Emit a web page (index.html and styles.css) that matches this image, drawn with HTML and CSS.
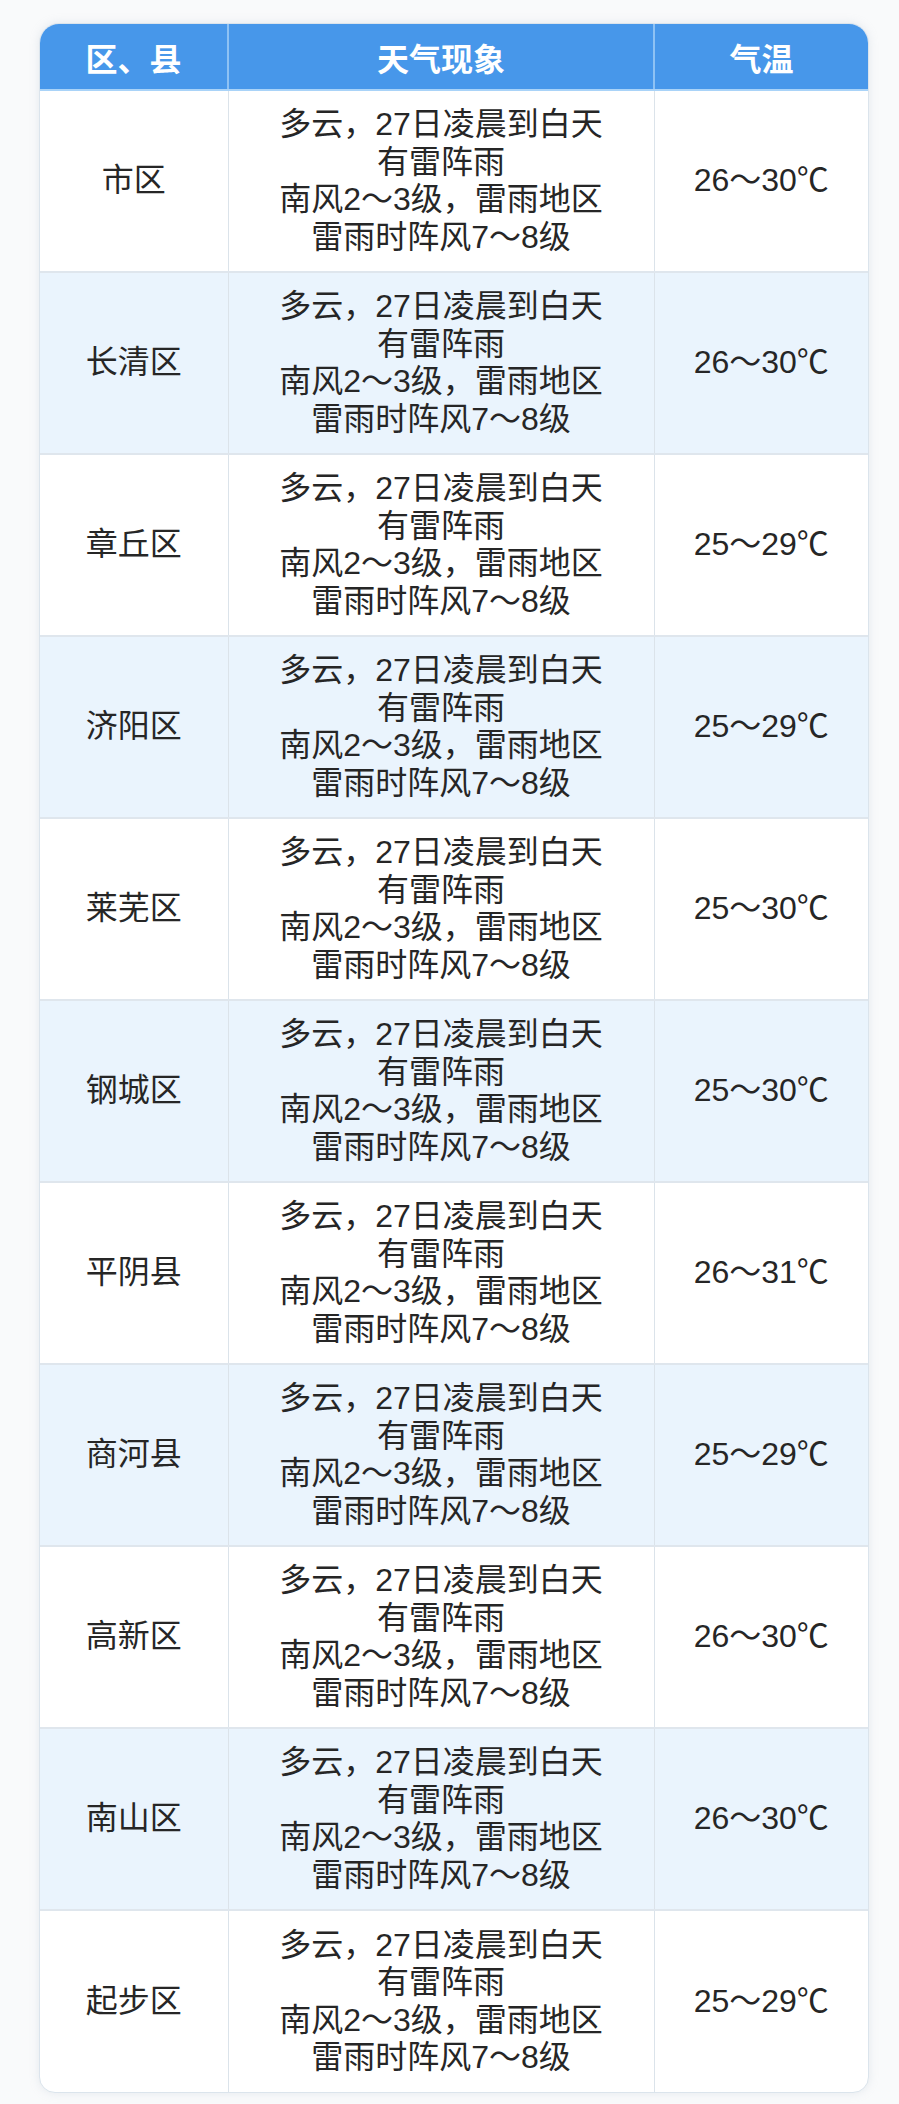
FILE: index.html
```html
<!DOCTYPE html>
<html lang="zh">
<head>
<meta charset="utf-8">
<title>天气预报</title>
<link rel="stylesheet" href="styles.css">
</head>
<body>
<div class="page">
  <div class="card">
    <table class="weather">
      <thead>
        <tr><th class="c1">区、县</th><th class="c2">天气现象</th><th class="c3">气温</th></tr>
      </thead>
      <tbody>
        <tr><td>市区</td><td>多云，27日凌晨到白天<br>有雷阵雨<br>南风2～3级，雷雨地区<br>雷雨时阵风7～8级</td><td>26～30℃</td></tr>
        <tr class="alt"><td>长清区</td><td>多云，27日凌晨到白天<br>有雷阵雨<br>南风2～3级，雷雨地区<br>雷雨时阵风7～8级</td><td>26～30℃</td></tr>
        <tr><td>章丘区</td><td>多云，27日凌晨到白天<br>有雷阵雨<br>南风2～3级，雷雨地区<br>雷雨时阵风7～8级</td><td>25～29℃</td></tr>
        <tr class="alt"><td>济阳区</td><td>多云，27日凌晨到白天<br>有雷阵雨<br>南风2～3级，雷雨地区<br>雷雨时阵风7～8级</td><td>25～29℃</td></tr>
        <tr><td>莱芜区</td><td>多云，27日凌晨到白天<br>有雷阵雨<br>南风2～3级，雷雨地区<br>雷雨时阵风7～8级</td><td>25～30℃</td></tr>
        <tr class="alt"><td>钢城区</td><td>多云，27日凌晨到白天<br>有雷阵雨<br>南风2～3级，雷雨地区<br>雷雨时阵风7～8级</td><td>25～30℃</td></tr>
        <tr><td>平阴县</td><td>多云，27日凌晨到白天<br>有雷阵雨<br>南风2～3级，雷雨地区<br>雷雨时阵风7～8级</td><td>26～31℃</td></tr>
        <tr class="alt"><td>商河县</td><td>多云，27日凌晨到白天<br>有雷阵雨<br>南风2～3级，雷雨地区<br>雷雨时阵风7～8级</td><td>25～29℃</td></tr>
        <tr><td>高新区</td><td>多云，27日凌晨到白天<br>有雷阵雨<br>南风2～3级，雷雨地区<br>雷雨时阵风7～8级</td><td>26～30℃</td></tr>
        <tr class="alt"><td>南山区</td><td>多云，27日凌晨到白天<br>有雷阵雨<br>南风2～3级，雷雨地区<br>雷雨时阵风7～8级</td><td>26～30℃</td></tr>
        <tr><td>起步区</td><td>多云，27日凌晨到白天<br>有雷阵雨<br>南风2～3级，雷雨地区<br>雷雨时阵风7～8级</td><td>25～29℃</td></tr>
      </tbody>
    </table>
  </div>
</div>
</body>
</html>
```

FILE: styles.css
```css
html, body {
  margin: 0;
  padding: 0;
  background: #f9fafb;
}
.page {
  padding: 23px 30px 10px 39px;
}
.card {
  width: 830px;
  border-radius: 20px 20px 16px 16px;
  overflow: hidden;
  background: #ffffff;
  border: 1px solid #dbe4ec;
  box-sizing: border-box;
  box-shadow: 0 0 10px rgba(170, 185, 200, 0.25);
}
.weather {
  width: 100%;
  border-collapse: collapse;
  table-layout: fixed;
  font-family: "Liberation Sans", "Noto Sans CJK SC", sans-serif;
  color: #262626;
}
.weather th {
  background: #4797ea;
  color: #ffffff;
  font-size: 32px;
  font-weight: 700;
  height: 66px;
  padding: 0;
  border-left: 2px solid #8ec2f4;
  border-bottom: 2px solid #a9d3f8;
  box-sizing: border-box;
}
.weather th:first-child { border-left: none; }
.weather .c1 { width: 188px; }
.weather .c2 { width: 426px; }
.weather td {
  height: 182px;
  padding: 0;
  text-align: center;
  vertical-align: middle;
  font-size: 32px;
  line-height: 37.5px;
  border-left: 1px solid #dbe3ea;
  border-top: 2px solid #dfe6ed;
  box-sizing: border-box;
}
.weather td:first-child { border-left: none; }
.weather tbody tr:first-child td { border-top: none; }
.weather tr.alt td { background: #eaf4fd; }
```
